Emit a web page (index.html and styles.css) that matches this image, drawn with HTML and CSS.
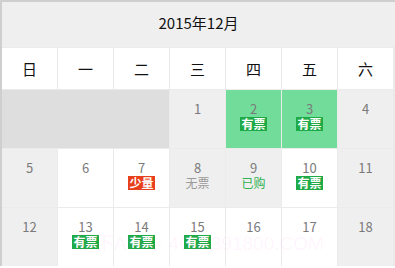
FILE: index.html
```html
<!DOCTYPE html>
<html lang="zh">
<head>
<meta charset="utf-8">
<link rel="stylesheet" href="styles.css">
</head>
<body>
<div class="cal">
  <div class="title">2015年12月</div>
  <div class="grid">
    <div class="wk">日</div>
    <div class="wk">一</div>
    <div class="wk">二</div>
    <div class="wk">三</div>
    <div class="wk">四</div>
    <div class="wk">五</div>
    <div class="wk">六</div>

    <div class="blank"></div>
    <div class="day past"><span class="num">1</span></div>
    <div class="day green"><span class="num">2</span><span class="tag ok">有票</span></div>
    <div class="day green"><span class="num">3</span><span class="tag ok">有票</span></div>
    <div class="day past"><span class="num">4</span></div>

    <div class="day past"><span class="num">5</span></div>
    <div class="day"><span class="num">6</span></div>
    <div class="day"><span class="num">7</span><span class="tag few">少量</span></div>
    <div class="day past"><span class="num">8</span><span class="txt none">无票</span></div>
    <div class="day past"><span class="num">9</span><span class="txt bought">已购</span></div>
    <div class="day"><span class="num">10</span><span class="tag ok">有票</span></div>
    <div class="day past"><span class="num">11</span></div>

    <div class="day past"><span class="num">12</span></div>
    <div class="day"><span class="num">13</span><span class="tag ok">有票</span></div>
    <div class="day"><span class="num">14</span><span class="tag ok">有票</span></div>
    <div class="day"><span class="num">15</span><span class="tag ok">有票</span></div>
    <div class="day"><span class="num">16</span></div>
    <div class="day"><span class="num">17</span></div>
    <div class="day past"><span class="num">18</span></div>
  </div>
  <div class="mark">易下APP · 4008391800.COM</div>
</div>
</body>
</html>
```
FILE: styles.css
```css
html, body {
  margin: 0;
  padding: 0;
  background: #ffffff;
}
body {
  width: 395px;
  height: 268px;
  overflow: hidden;
  font-family: "Noto Sans CJK SC", "Noto Sans", sans-serif;
}
.cal {
  position: relative;
  border-top: 2px solid #cfcfcf;
  border-left: 2px solid #cfcfcf;
  background: #efefef;
}
.title {
  height: 45px;
  box-sizing: border-box;
  padding-bottom: 4px;
  display: flex;
  align-items: center;
  justify-content: center;
  font-size: 15px;
  color: #111;
  background: #efefef;
}
.grid {
  display: grid;
  grid-template-columns: repeat(7, 55px);
  grid-auto-rows: 58px;
  grid-template-rows: 41px;
  gap: 1px;
  padding: 1px 1px 0 0;
  background: #ebebeb;
}
.wk {
  background: #fff;
  display: flex;
  align-items: center;
  justify-content: center;
  font-size: 15px;
  color: #111;
}
.blank {
  grid-column: span 3;
  background: #dedede;
}
.day {
  background: #fff;
  display: flex;
  flex-direction: column;
  align-items: center;
  padding-top: 11px;
  box-sizing: border-box;
}
.day.past { background: #efefef; }
.day.green { background: #72dc9a; }
.num {
  font-size: 13px;
  line-height: 15px;
  color: #7a7a7a;
}
.tag {
  margin-top: 1px;
  font-size: 12px;
  line-height: 14px;
  padding: 0 1px;
  color: #fff;
  font-weight: bold;
}
.tag.ok { background: #1faa48; }
.tag.few { background: #e8401c; }
.txt {
  margin-top: 1px;
  font-size: 12px;
  line-height: 14px;
}
.txt.none { color: #9a9a9a; }
.txt.bought { color: #2fb14f; }
.mark {
  position: absolute;
  left: 74px;
  top: 230px;
  font-size: 19px;
  line-height: 24px;
  color: rgba(255, 110, 225, 0.08);
  white-space: nowrap;
  font-family: "Liberation Sans", "Noto Sans CJK SC", sans-serif;
}
```
